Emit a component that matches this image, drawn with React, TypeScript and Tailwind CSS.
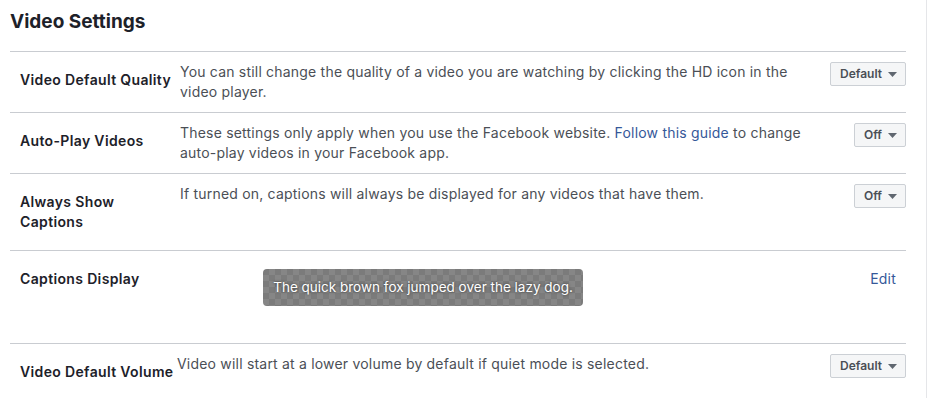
import React from "react";

function Caret() {
    return (
        <svg width="9" height="5" viewBox="0 0 9 5" className="ml-[6px]">
            <path d="M0 0h9L4.5 5z" fill="#606770" />
        </svg>
    );
}

function Dropdown({ label }: { label: string }) {
    return (
        <button className="flex h-[24px] items-center rounded-[2px] border border-[#ccd0d5] bg-[#f5f6f7] pl-[9px] pr-[8px] text-[12px] font-semibold text-[#4b4f56]">
            {label}
            <Caret />
        </button>
    );
}

function Row({
    label,
    labelWidth = "w-[160px]",
    children,
    right,
}: {
    label: React.ReactNode;
    labelWidth?: string;
    children: React.ReactNode;
    right: React.ReactNode;
}) {
    return (
        <div className="flex border-t border-[#c9ccd1] pl-[10px]">
            <div className={`${labelWidth} shrink-0 py-[18px] text-[14px] font-semibold leading-[20px] tracking-[0.35px] text-[#1d2129]`}>
                {label}
            </div>
            <div className="flex-1 py-[10px] pr-[8px] text-[14px] leading-[20px] tracking-[0.2px] text-[#4b4f56]">{children}</div>
            <div className="flex w-[86px] shrink-0 justify-end pt-[10px]">{right}</div>
        </div>
    );
}

export default function App() {
    return (
        <main className="min-h-[398px] bg-white font-['Inter','Liberation_Sans',Arial,sans-serif]">
            <div className="mr-[2px] min-h-[398px] w-[927px] border-r border-[#e5e6e9] pl-[10px] pr-[20px]">
                <h1 className="pt-[10px] pb-[17px] text-[19px] font-bold leading-[24px] text-[#1d2129]">Video Settings</h1>

                <Row label="Video Default Quality" right={<Dropdown label="Default" />}>
                    You can still change the quality of a video you are watching by clicking the HD icon in the video player.
                </Row>

                <Row label="Auto-Play Videos" right={<Dropdown label="Off" />}>
                    These settings only apply when you use the Facebook website.{" "}
                    <span className="text-[#365899]">Follow this guide</span> to change auto-play videos in your Facebook app.
                </Row>

                <Row label={<>Always Show<br />Captions</>} right={<Dropdown label="Off" />}>
                    If turned on, captions will always be displayed for any videos that have them.
                </Row>

                {/* captions preview */}
                <div className="flex h-[93px] border-t border-[#c9ccd1] pl-[10px]">
                    <div className="w-[160px] shrink-0 pt-[18px] text-[14px] font-semibold leading-[20px] tracking-[0.35px] text-[#1d2129]">
                        Captions Display
                    </div>
                    <div className="flex-1 pt-[18px] pl-[83px]">
                        <div className="inline-flex h-[37px] w-[320px] items-center justify-center rounded-[4px] bg-[conic-gradient(#868686_25%,#7b7b7b_0_50%,#868686_0_75%,#7b7b7b_0)] bg-[length:12px_12px] text-[13.5px] text-white [text-shadow:0_0_3px_rgba(0,0,0,0.6)]">
                            The quick brown fox jumped over the lazy dog.
                        </div>
                    </div>
                    <div className="pt-[18px] pr-[10px] text-[14px] leading-[20px] tracking-[0.2px] text-[#365899]">Edit</div>
                </div>

                <Row label="Video Default Volume" labelWidth="w-[157px] whitespace-nowrap" right={<Dropdown label="Default" />}>
                    Video will start at a lower volume by default if quiet mode is selected.
                </Row>
            </div>
        </main>
    );
}
